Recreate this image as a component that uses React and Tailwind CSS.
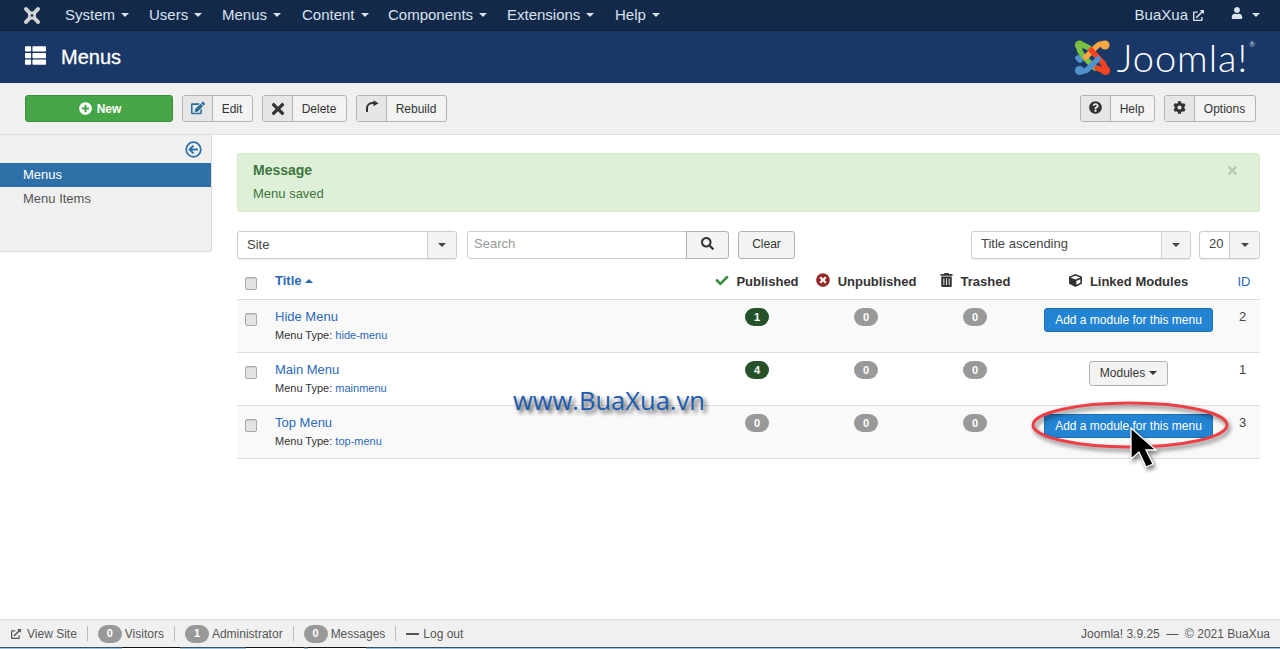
import React from "react";
import { FaCheck, FaTimesCircle, FaTrashAlt, FaCube, FaSearch, FaCog, FaQuestionCircle, FaUser, FaEdit, FaTimes, FaPlusCircle, FaThList, FaExternalLinkAlt } from "react-icons/fa";

const Caret = ({ className = "" }) => (
  <span className={"inline-block w-0 h-0 border-x-[4px] border-x-transparent border-t-[4px] " + className} />
);

const JoomlaMark = () => (
  <svg width="37" height="37" viewBox="0 0 37 37" fill="none" strokeLinecap="round" strokeLinejoin="round">
    <path d="M15 9 L9 6 M5 8 C5 13 8 16 11 19 L21 29" stroke="#7ac143" strokeWidth="5.5" />
    <circle cx="5.5" cy="6" r="4.6" fill="#7ac143" />
    <path d="M12 18 L22 8 C24 6 27 4 31 5" stroke="#f9a541" strokeWidth="5.5" />
    <circle cx="31" cy="6" r="4.6" fill="#f9a541" />
    <path d="M17 11 L28 23 C30 25 31 28 31 31 M23 29 L30 32" stroke="#f44321" strokeWidth="5.5" />
    <circle cx="31.5" cy="31.5" r="4.6" fill="#f44321" />
    <path d="M24 20 L14 30 C12 32 9 33 6 32 M4 19 L6 21" stroke="#5091cd" strokeWidth="5.5" />
    <circle cx="5.5" cy="31.5" r="4.6" fill="#5091cd" />
  </svg>
);

const RebuildIcon = () => (
  <svg width="14" height="14" viewBox="0 0 14 14" fill="none">
    <path d="M2 12 V8 C2 4.5 5 3 8 3 H9.5" stroke="#333" strokeWidth="2" />
    <path d="M8.5 0.2 L13.5 3.2 L8.5 6.2 Z" fill="#333" />
  </svg>
);

const ToolBtn = ({ icon, label, iconClass = "text-[#333]", w }) => (
  <button className={"flex h-[27px] border border-[#b3b3b3] rounded-[3px] overflow-hidden bg-[#f3f3f3] text-[12px] text-[#333] " + w}>
    <span className={"w-[30px] h-full flex items-center justify-center bg-[#e6e6e6] border-r border-[#b3b3b3] shrink-0 pb-[2px] " + iconClass}>{icon}</span>
    <span className="flex-1 h-full flex items-center justify-center pr-[1px] pt-[1px]">{label}</span>
  </button>
);

const SelectBox = ({ label, w, box = "w-[29px]", textClass = "" }) => (
  <div className={"flex h-[28px] border border-[#ccc] rounded-[3px] bg-white overflow-hidden shadow-[0_1px_1px_rgba(0,0,0,0.08)] " + w}>
    <span className={"flex-1 pl-[9px] flex items-center text-[13px] text-[#444] " + textClass}>{label}</span>
    <span className={"flex items-center justify-center bg-[#f3f3f3] border-l border-[#ccc] " + box}><Caret className="border-t-[#444]" /></span>
  </div>
);

const Badge = ({ n, on }) => (
  <span className={"inline-flex items-center justify-center w-[24px] h-[18px] rounded-[9px] text-[11px] font-bold text-white " + (on ? "bg-[#26522a]" : "bg-[#999]")}>{n}</span>
);

const AddBtn = () => (
  <button className="inline-flex items-center justify-center w-[169px] h-[24px] rounded-[3px] bg-[#2384d3] border border-[#1d6fb3] text-white text-[12px]">Add a module for this menu</button>
);

const Check = () => (
  <span className="block w-[12px] h-[13px] border border-[#aaa] rounded-[2px] bg-[#e4e4e4] shadow-[inset_0_1px_1px_rgba(0,0,0,0.1)]" />
);

const Row = ({ name, type, pub, id, alt, modules }) => (
  <tr className={"h-[53px] border-b border-[#ddd] align-top text-[13px] " + (alt ? "bg-[#f9f9f9]" : "bg-white")}>
    <td className="pl-2 pt-[13px]"><Check /></td>
    <td className="pl-2 pt-[8px]">
      <div className="text-[#2a69b8] leading-[18px]">{name}</div>
      <div className="text-[11px] leading-[16px] mt-[1px] text-[#333]">Menu Type: <span className="text-[#2a69b8]">{type}</span></div>
    </td>
    <td className="text-center pt-[7px]"><Badge n={pub} on={pub !== "0"} /></td>
    <td className="text-center pt-[7px]"><Badge n="0" /></td>
    <td className="text-center pt-[7px]"><Badge n="0" /></td>
    <td className="text-center pt-[8px]">
      {modules ? (
        <button className="inline-flex items-center justify-center gap-[4px] w-[79px] h-[25px] rounded-[3px] bg-[#f3f3f3] border border-[#b3b3b3] text-[12px] text-[#333]">Modules <Caret className="border-t-[#333]" /></button>
      ) : <AddBtn />}
    </td>
    <td className="text-center pt-[8px] pr-[3px] text-[#444] leading-[18px]">{id}</td>
  </tr>
);

const Sep = () => <span className="w-px h-[15px] bg-[#bbb] mx-[10px]" />;
const FBadge = ({ n }) => <span className="inline-flex items-center justify-center w-[24px] h-[18px] rounded-[9px] bg-[#999] text-white text-[11px] font-bold mr-[3px]">{n}</span>;

export default function App() {
  const nav = [["System", "w-[84px]"], ["Users", "w-[73px]"], ["Menus", "w-[80px]"], ["Content", "w-[86px]"], ["Components", "w-[119px]"], ["Extensions", "w-[108px]"], ["Help", "w-[60px]"]];
  return (
    <div className="relative w-[1280px] h-[649px] overflow-hidden flex flex-col bg-white font-['Liberation_Sans',Arial,sans-serif] text-[13px] text-[#333]">
      {/* top navbar */}
      <div className="h-[31px] shrink-0 flex items-center bg-[#13294a] border-b border-[#0e1f38] text-[#d9e2ee] text-[15px]">
        <span className="w-[65px] flex justify-center pr-[2px]">
          <svg width="18" height="19" viewBox="0 0 18 19" fill="none" stroke="#d4d4d4" strokeLinecap="round">
            <path d="M3 3 L15 16 M15 3 L3 16" strokeWidth="4" />
            <path d="M6 6.5 H12 V12.5 H6 Z" strokeWidth="2" />
            <circle cx="9" cy="9.5" r="1.2" fill="#13294a" stroke="none" />
          </svg>
        </span>
        {nav.map(([t, w]) => (
          <span key={t} className={"flex items-center gap-[6px] " + w}>{t}<Caret className="border-t-[#d9e2ee]" /></span>
        ))}
        <span className="ml-auto flex items-center gap-[5px]">BuaXua<FaExternalLinkAlt className="w-[11px] h-[11px]" /></span>
        <span className="flex items-center gap-[9px] ml-[27px] mr-[20px]"><FaUser className="w-[12px] h-[12px] -mt-[4px]" /><Caret className="border-t-[#d9e2ee]" /></span>
      </div>
      {/* title */}
      <div className="h-[52px] shrink-0 flex items-center bg-[#1a3867] pl-[25px] pr-[25px] text-white">
        <FaThList className="w-[21px] h-[21px] mr-[15px] -mt-[4px]" />
        <span className="text-[20px] [-webkit-text-stroke:0.3px_white]">Menus</span>
        <span className="ml-auto flex items-center gap-[6px]">
          <JoomlaMark />
          <span className="flex items-start font-['Lato',sans-serif] font-light">
            <span className="text-[38px] leading-[38px] tracking-[1px]">Joomla!</span>
            <span className="text-[7px] leading-none mt-[3px] ml-[1px] font-normal text-[#cfd8e6]">®</span>
          </span>
        </span>
      </div>
      {/* toolbar */}
      <div className="h-[52px] shrink-0 flex items-center gap-[9px] bg-[#f0f0f0] border-b border-[#ddd] pl-[25px] pr-[24px] pb-[1px]">
        <button className="flex items-center justify-center gap-[5px] pl-[2px] w-[148px] h-[27px] rounded-[3px] bg-[#46a546] border border-[#3d8f3d] text-white text-[12px] font-bold"><FaPlusCircle className="w-[13px] h-[13px]" /><span className="pt-[1px]">New</span></button>
        <ToolBtn w="w-[71px]" icon={<FaEdit className="w-[14px] h-[14px] mt-[2px]" />} label="Edit" iconClass="text-[#2a6f97]" />
        <ToolBtn w="w-[85px]" icon={<FaTimes className="w-[18px] h-[18px] mt-[3px]" />} label="Delete" />
        <ToolBtn w="w-[91px]" icon={<RebuildIcon />} label="Rebuild" />
        <span className="ml-auto" />
        <ToolBtn w="w-[75px]" icon={<FaQuestionCircle className="w-[13px] h-[13px]" />} label="Help" />
        <ToolBtn w="w-[92px]" icon={<FaCog className="w-[13px] h-[13px]" />} label="Options" />
      </div>
      {/* main */}
      <div className="flex-1 flex min-h-0">
        <aside className="w-[212px] h-[117px] shrink-0 bg-[#f0f0f0] border-r border-b border-[#ddd] rounded-br-[3px]">
          <div className="h-[28px] flex justify-end items-center pr-[9px]">
            <svg width="17" height="17" viewBox="0 0 17 17" fill="none" stroke="#2f6fab" strokeWidth="1.7">
              <circle cx="8.5" cy="8.5" r="7.3" />
              <path d="M8.5 4.6 L4.6 8.5 L8.5 12.4 M4.8 8.5 H13" strokeWidth="2" />
            </svg>
          </div>
          <div className="h-[24px] flex items-center pl-[23px] bg-[#2f70a9] text-white">Menus</div>
          <div className="h-[24px] flex items-center pl-[23px] text-[#555]">Menu Items</div>
        </aside>
        <main className="flex-1 pt-[18px] pl-[25px] pr-[20px]">
          <div className="relative h-[59px] bg-[#dff0d8] border border-[#d6e9c6] rounded-[3px] pl-[15px] pt-[7px] text-[#3c763d]">
            <div className="text-[14px] font-bold leading-[18px]">Message</div>
            <div className="text-[13px] leading-[18px] mt-[6px]">Menu saved</div>
            <FaTimes className="absolute right-[20px] top-[10px] w-[13px] h-[13px] text-[#b9c9b2]" />
          </div>
          <div className="flex items-center mt-[19px] h-[28px]">
            <SelectBox label="Site" w="w-[220px]" />
            <div className="ml-[10px] flex h-[28px] w-[262px]">
              <span className="flex-1 border border-[#ccc] rounded-l-[3px] pl-[6px] pb-[2px] flex items-center text-[13px] text-[#999]">Search</span>
              <span className="w-[43px] -ml-px pb-[3px] flex items-center justify-center border border-[#b3b3b3] bg-[#f3f3f3] rounded-r-[3px]"><FaSearch className="w-[13px] h-[13px] text-[#333]" /></span>
            </div>
            <button className="ml-[9px] w-[57px] h-[28px] pb-[2px] border border-[#b3b3b3] rounded-[3px] bg-[#f3f3f3] text-[12px] text-[#333]">Clear</button>
            <span className="ml-auto"><SelectBox label="Title ascending" w="w-[220px]" textClass="pb-[2px]" /></span>
            <span className="ml-[8px]"><SelectBox label="20" w="w-[61px]" box="w-[30px]" textClass="pb-[2px]" /></span>
          </div>
          <table className="table-fixed w-[1023px] border-collapse mt-[6px]">
            <colgroup>
              <col className="w-[30px]" /><col /><col className="w-[108px]" /><col className="w-[110px]" /><col className="w-[108px]" /><col className="w-[199px]" /><col className="w-[32px]" />
            </colgroup>
            <thead>
              <tr className="h-[34px] border-b border-[#ddd] text-[13px] font-bold text-[#333]">
                <td className="pl-2 pt-[4px]"><Check /></td>
                <td className="pl-2 pb-[2px]"><span className="inline-flex items-center gap-[3px] text-[#2a69b8]">Title<span className="inline-block w-0 h-0 border-x-[4px] border-x-transparent border-b-[4px] border-b-[#2a69b8]" /></span></td>
                <td className="text-center pt-[1px]"><span className="inline-flex items-center gap-[7px]"><FaCheck className="w-[14px] h-[13px] -mt-[2px] text-[#3c8f3c]" />Published</span></td>
                <td className="text-center pt-[1px]"><span className="inline-flex items-center gap-[8px]"><FaTimesCircle className="w-[14px] h-[14px] -mt-[2px] text-[#942a25]" />Unpublished</span></td>
                <td className="text-center pt-[1px]"><span className="inline-flex items-center gap-[8px]"><FaTrashAlt className="w-[13px] h-[14px] -mt-[2px] text-[#333]" />Trashed</span></td>
                <td className="text-center pt-[1px]"><span className="inline-flex items-center gap-[8px]"><FaCube className="w-[13px] h-[13px] -mt-[2px] text-[#333]" />Linked Modules</span></td>
                <td className="text-center font-normal text-[#2a69b8]">ID</td>
              </tr>
            </thead>
            <tbody>
              <Row name="Hide Menu" type="hide-menu" pub="1" id="2" alt />
              <Row name="Main Menu" type="mainmenu" pub="4" id="1" modules />
              <Row name="Top Menu" type="top-menu" pub="0" id="3" alt />
            </tbody>
          </table>
        </main>
      </div>
      {/* footer */}
      <div className="h-[28px] shrink-0 flex items-center bg-[#f0f0f0] border-t border-[#ddd] pl-[11px] pr-[10px] text-[12px] text-[#555]">
        <FaExternalLinkAlt className="w-[10px] h-[10px] mr-[6px]" />View Site<Sep />
        <FBadge n="0" />Visitors<Sep />
        <FBadge n="1" />Administrator<Sep />
        <FBadge n="0" />Messages<Sep />
        <span className="w-[13px] h-[2px] bg-[#555] mr-[4px]" />Log out
        <span className="ml-auto">Joomla! 3.9.25 &nbsp;— &nbsp;© 2021 BuaXua</span>
      </div>
      {/* strip of the desktop's task bar under the page */}
      <div className="h-[2px] shrink-0 flex">
        <span className="w-[122px] border-t border-[#3c4f60] bg-[#9ec3dc]" />
        <span className="w-[58px] border-t border-[#111] bg-white" />
        <span className="w-[66px] border-t border-[#3c4f60] bg-[#9ec3dc]" />
        <span className="w-[58px] border-t border-[#111] bg-white" />
        <span className="w-[4px] border-t border-[#3c4f60] bg-[#9ec3dc]" />
        <span className="w-[58px] border-t border-[#111] bg-white" />
        <span className="flex-1 border-t border-[#3c4f60] bg-[#9ec3dc]" />
      </div>

      {/* overlays on the screenshot */}
      <span className="absolute left-[513px] top-[383px] font-['Open_Sans',sans-serif] text-[25.5px] leading-[34px] text-[#1c5cb0] [text-shadow:3px_3px_4px_rgba(0,0,0,0.7)]">www.BuaXua.vn</span>
      <svg className="absolute left-[1020px] top-[395px] drop-shadow-[2px_3px_2px_rgba(0,0,0,0.5)]" width="220" height="90" viewBox="0 0 220 90" fill="none">
        <ellipse cx="110" cy="30" rx="97" ry="22" stroke="#ee3f45" strokeWidth="3" />
        <path d="M111 33 L111 64 L119 57 L126 72 L133 69 L126 55 L136 55 Z" fill="#000" stroke="#fff" strokeWidth="1.3" />
      </svg>
    </div>
  );
}
